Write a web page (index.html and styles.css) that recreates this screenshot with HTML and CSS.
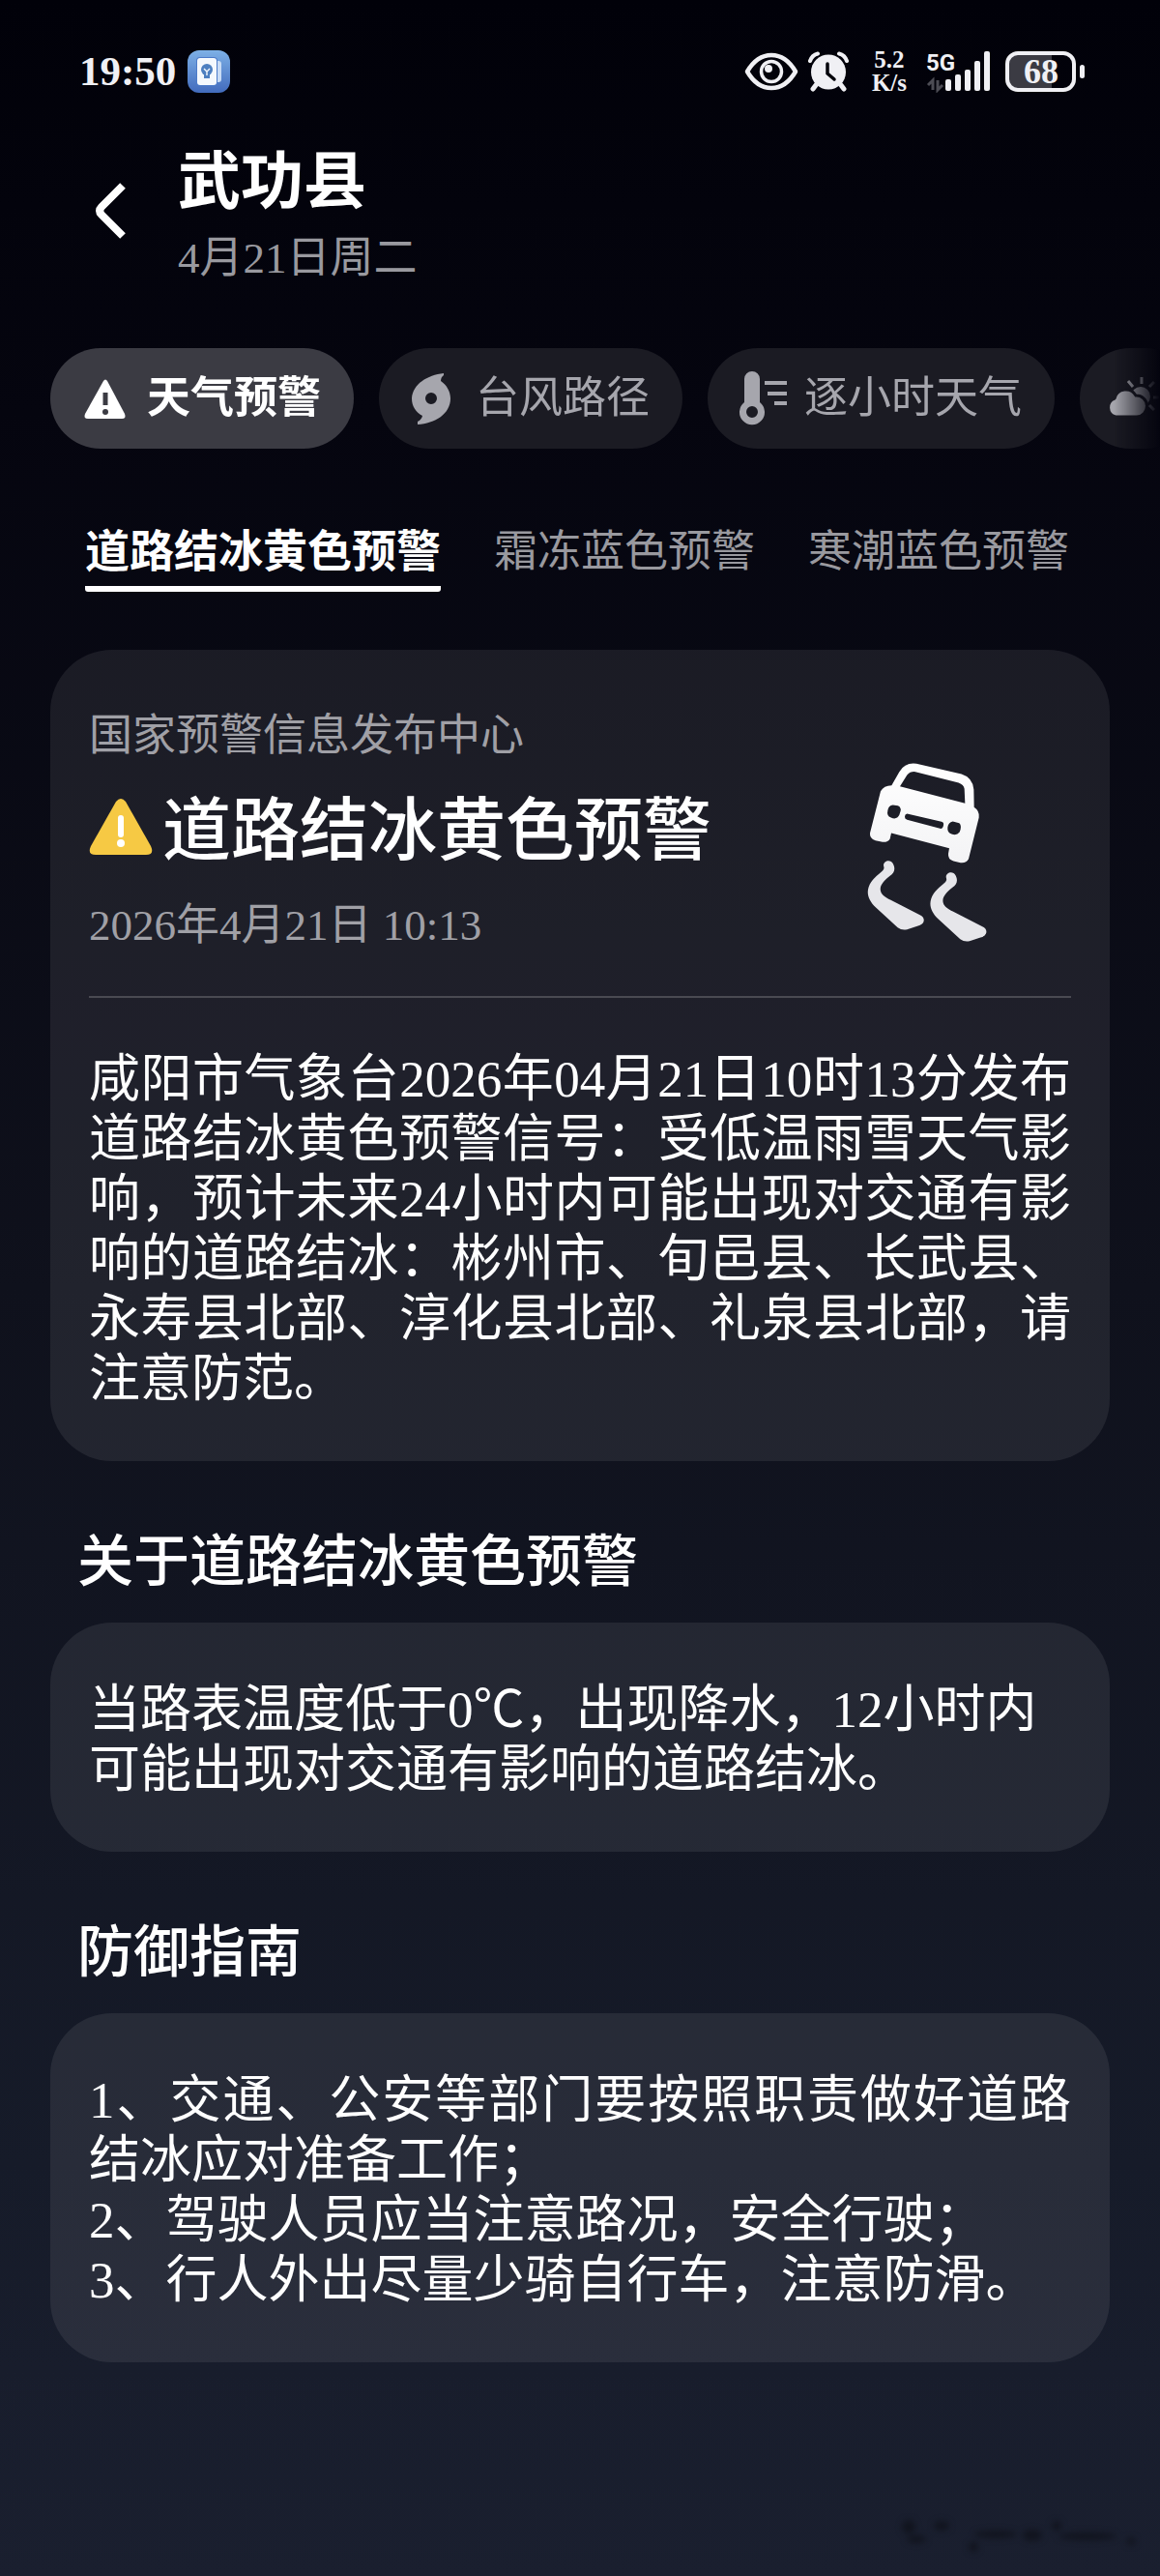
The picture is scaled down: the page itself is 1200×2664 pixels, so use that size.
FILE: index.html
```html
<!DOCTYPE html>
<html lang="zh-CN">
<head>
<meta charset="UTF-8">
<meta name="viewport" content="width=device-width, initial-scale=1.0">
<title>天气预警</title>
<link rel="stylesheet" href="styles.css">
</head>
<body>

<div class="status-bar">
    <span class="clock">19:50</span>
    <svg class="app-icon" viewBox="0 0 44 44" width="44" height="44">
        <defs>
            <linearGradient id="app-bg" x1="0" y1="0" x2="0" y2="1">
                <stop offset="0" stop-color="#7db0e6"/>
                <stop offset="1" stop-color="#426bbd"/>
            </linearGradient>
        </defs>
        <rect width="44" height="44" rx="12" fill="url(#app-bg)"/>
        <rect x="28" y="11" width="7" height="22" rx="3" fill="#c9dcf5"/>
        <rect x="9" y="7" width="22" height="30" rx="4" fill="#4c7bc9"/>
        <rect x="10" y="8" width="20" height="28" rx="3" fill="#f4f8fd"/>
        <circle cx="20" cy="20" r="6" fill="#4d7fc0"/>
        <path d="M17 24h6v5h-6z" fill="#4d7fc0"/>
        <path d="M17 19l3 3 3-3M20 22v4" fill="none" stroke="#f4f8fd" stroke-width="1.4"/>
    </svg>
    <div class="status-right">
        <svg class="eye" viewBox="0 0 56 40" width="56" height="40" fill="none" stroke="#f0f0f4">
            <path d="M3 20C10 8 18 3 28 3s18 5 25 17C46 32 38 37 28 37S10 32 3 20z" stroke-width="4.5" stroke-linejoin="round"/>
            <circle cx="28" cy="20" r="10.500" stroke-width="3.5"/>
            <circle cx="25" cy="17" r="4" fill="#f0f0f4" stroke="none"/>
        </svg>
        <svg class="alarm" viewBox="0 0 42 42" width="42" height="42" fill="none" stroke="#f0f0f4" stroke-linecap="round">
            <circle cx="21" cy="21.500" r="18" fill="#f0f0f4" stroke="none"/>
            <path d="M2 10Q4 4 10 2.500M40 10Q38 4 32 2.500" stroke-width="4"/>
            <path d="M8 35l-3 4M34 35l3 4" stroke-width="5"/>
            <path d="M20 13v10l7 6" stroke="#02020a" stroke-width="3.5"/>
        </svg>
        <span class="speed">5.2<br>K/s</span>
        <svg class="signal" viewBox="0 0 68 44" width="68" height="44" fill="#f0f0f4">
            <text class="network" x="0" y="21">5G</text>
            <rect x="20" y="30" width="6" height="12" rx="2"/>
            <rect x="30" y="25" width="6" height="17" rx="2"/>
            <rect x="40" y="20" width="6" height="22" rx="2"/>
            <rect x="50" y="11" width="6" height="31" rx="2"/>
            <rect x="60" y="1" width="6" height="41" rx="2"/>
            <path d="M7 41V31l-5 5M12 31v10l5-5" fill="none" stroke="#4c4c54" stroke-width="3"/>
        </svg>
        <svg class="battery" viewBox="0 0 82 42" width="82" height="42">
            <path d="M10 4h38v34H10a7 7 0 0 1-7-7V11a7 7 0 0 1 7-7z" fill="#3b3b43"/>
            <rect x="2" y="2" width="69" height="38" rx="11" fill="none" stroke="#f0f0f4" stroke-width="4"/>
            <rect x="77" y="14" width="5" height="14" rx="2.500" fill="#f0f0f4"/>
            <text class="level" x="37" y="33">68</text>
        </svg>
    </div>
</div>

<header class="header">
    <button class="back" type="button" aria-label="返回">
        <svg viewBox="0 0 40 64" width="40" height="64">
            <path d="M31 6L9 28q-4 4 0 8l22 22" fill="none" stroke="#fff" stroke-width="8"/>
        </svg>
    </button>
    <div>
        <h1>武功县</h1>
        <p class="today">4月21日周二</p>
    </div>
</header>

<nav class="chips">
    <button class="chip active" type="button">
        <svg viewBox="0 0 60 60" width="60" height="60">
            <path d="M29 12q2-3 4 0l18 34q2 5-3 5H13q-5 0-3-5z" fill="#fff"/>
            <path d="M31 24v13" stroke="#3b3b43" stroke-width="5"/>
            <circle cx="31" cy="44" r="3" fill="#3b3b43"/>
        </svg>
        天气预警
    </button>
    <button class="chip" type="button">
        <svg viewBox="0 0 60 60" width="60" height="60">
            <path fill-rule="evenodd" d="M41 4C24 6 9 15 8 30c0 8 4 14 11 18q-1 4-5 6v3C32 56 48 46 48 30c0-7-4-14-10-18q0-4 3-6zM28 24a6 6 0 1 1 0 12 6 6 0 0 1 0-12z" fill="#a6a6ad"/>
        </svg>
        台风路径
    </button>
    <button class="chip" type="button">
        <svg viewBox="0 0 60 60" width="60" height="60">
            <path fill-rule="evenodd" d="M12 10a8 8 0 0 1 16 0v24a13 13 0 1 1-16 0zM20 38a6 6 0 1 0 0 12 6 6 0 0 0 0-12z" fill="#a6a6ad"/>
            <path d="M33 14h23M36 25h20M43 35h13" stroke="#a6a6ad" stroke-width="4"/>
        </svg>
        逐小时天气
    </button>
    <button class="chip" type="button" aria-label="多日天气">
        <svg viewBox="0 0 60 60" width="60" height="60" fill="#a6a6ad">
            <circle cx="37" cy="28" r="10"/>
            <path d="M38 15V8M29 18l-5-6M46 18l5-5M50 29h6M46 37l5 5" stroke="#a6a6ad" stroke-width="3"/>
            <path d="M11 49a10 10 0 0 1-1-19 12 12 0 0 1 22-3 11 11 0 0 1 1 22z" stroke="#1b1b23" stroke-width="3"/>
        </svg>
    </button>
</nav>

<nav class="tabs">
    <a class="tab active" href="#">道路结冰黄色预警</a>
    <a class="tab" href="#">霜冻蓝色预警</a>
    <a class="tab" href="#">寒潮蓝色预警</a>
</nav>

<main>
    <article class="card">
        <div class="summary">
            <div>
                <p class="source">国家预警信息发布中心</p>
                <h2 class="alert-title">
                    <svg viewBox="0 0 66 60" width="66" height="60">
                        <path d="M28 4q5-6 10 0l26 46q4 9-5 9H7q-9 0-5-9z" fill="#f6c944"/>
                        <path d="M33 21v17" stroke="#fff" stroke-width="6" stroke-linecap="round"/>
                        <circle cx="33" cy="47" r="4" fill="#fff"/>
                    </svg>
                    道路结冰黄色预警
                </h2>
                <p class="time">2026年4月21日 10:13</p>
            </div>
            <svg class="car" viewBox="112 80 378 560" width="126" height="187">
                <defs>
                    <linearGradient id="car-fill" x1="0" y1="0" x2="0" y2="1">
                        <stop offset="0" stop-color="#ffffff"/>
                        <stop offset="1" stop-color="#f3f3f5"/>
                    </linearGradient>
                </defs>
                <path fill="url(#car-fill)" fill-rule="evenodd" d="M188 152L212 110Q230 80 265 85L405 117Q440 128 443 165L444 220Q462 232 459 252L427 380Q420 394 402 392L380 387Q362 382 364 364L367 347L187 300L183 318Q177 329 160 328L138 323Q119 317 121 300L154 170Q164 152 188 152ZM214 155L416 208L414 163Q412 150 396 144L262 110Q246 108 236 120ZM192 213Q178 215 176 230Q172 246 186 252Q204 260 212 244Q222 220 208 215ZM236 240Q229 241 229 249Q228 256 236 259L338 286Q347 288 349 276Q351 267 343 265ZM378 264Q364 267 362 282Q360 298 374 303Q390 309 399 297Q407 277 398 269Z"/>
                <g fill="#e6e6ea">
                    <path id="skid" d="M164 405C158 388 184 378 193 396C201 412 196 424 183 433C162 449 150 465 154 480C158 494 170 500 184 507L276 554Q292 562 287 576Q284 584 270 588L236 599Q220 603 207 593L140 532C116 510 110 488 117 467C125 445 145 430 160 417Q166 411 164 405Z"/>
                    <use href="#skid" x="194" y="36"/>
                </g>
            </svg>
        </div>
        <p class="text justified">咸阳市气象台2026年04月21日10时13分发布道路结冰黄色预警信号：受低温雨雪天气影响，预计未来24小时内可能出现对交通有影响的道路结冰：彬州市、旬邑县、长武县、永寿县北部、淳化县北部、礼泉县北部，请注意防范。</p>
    </article>

    <h2 class="section-title">关于道路结冰黄色预警</h2>
    <section class="card">
        <p class="text">当路表温度低于0℃，出现降水，12小时内可能出现对交通有影响的道路结冰。</p>
    </section>

    <h2 class="section-title">防御指南</h2>
    <section class="card">
        <p class="text justified">1、交通、公安等部门要按照职责做好道路结冰应对准备工作；<br>2、驾驶人员应当注意路况，安全行驶；<br>3、行人外出尽量少骑自行车，注意防滑。</p>
    </section>
</main>

<footer class="footer">
    <svg class="smudge" viewBox="0 0 256 40" width="256" height="40" fill="#11141e">
        <circle cx="20" cy="14" r="7"/>
        <ellipse cx="28" cy="27" rx="10" ry="4"/>
        <ellipse cx="54" cy="13" rx="8" ry="5"/>
        <circle cx="87" cy="35" r="5"/>
        <ellipse cx="110" cy="22" rx="22" ry="4"/>
        <ellipse cx="148" cy="23" rx="10" ry="6"/>
        <circle cx="173" cy="13" r="5"/>
        <ellipse cx="205" cy="24" rx="30" ry="4"/>
        <circle cx="250" cy="29" r="4"/>
    </svg>
</footer>

</body>
</html>
```
FILE: styles.css
```css
/* Base */
* {
    box-sizing: border-box;
}
body {
    margin: 0;
    min-height: 100vh;
    overflow-x: hidden;
    background: linear-gradient(#010109 0%, #05050f 16%, #0f111c 50%, #161b29 84%, #1a1f2f 100%);
    color: #fff;
    font-family: "Liberation Serif", "Noto Sans CJK SC", serif;
}
h1, h2, p {
    margin: 0;
    font-weight: normal;
}
button {
    border: none;
    background: none;
    padding: 0;
    color: inherit;
    font-family: inherit;
    cursor: pointer;
}
svg {
    display: block;
    flex: none;
}

/* Status bar */
.status-bar {
    display: flex;
    align-items: center;
    height: 96px;
    padding: 52px 78px 0 82px;
    color: #f0f0f4;
}
.clock {
    font-size: 43px;
    font-weight: bold;
    line-height: 44px;
}
.app-icon {
    margin-left: 12px;
}
.status-right {
    display: flex;
    align-items: center;
    margin-left: auto;
}
.alarm {
    margin-left: 10px;
}
.speed {
    margin: 0 20px 0 24px;
    font-size: 25px;
    font-weight: bold;
    line-height: 24px;
    text-align: center;
}
.network {
    font: bold 24px Roboto, sans-serif;
}
.battery {
    margin-left: 14px;
}
.level {
    fill: #f0f0f4;
    font-size: 36px;
    font-weight: bold;
    text-anchor: middle;
}

/* Header */
.header {
    display: flex;
    align-items: center;
    gap: 48px;
    padding: 54px 52px 0 96px;
}
.back {
    padding-bottom: 12px;
}
h1 {
    font-size: 65px;
    font-weight: bold;
    line-height: 76px;
}
.today {
    margin-top: 11px;
    color: #99999f;
    font-size: 45px;
    line-height: 60px;
}

/* Chips */
.chips {
    display: flex;
    gap: 26px;
    margin-top: 63px;
    padding-left: 52px;
    overflow: hidden;
    -webkit-mask-image: linear-gradient(to left, transparent, #000 48px);
    mask-image: linear-gradient(to left, transparent, #000 48px);
}
.chip {
    display: flex;
    flex: none;
    align-items: center;
    gap: 14px;
    height: 104px;
    padding: 0 34px 0 26px;
    border-radius: 52px;
    background: #1b1b23;
    color: #a6a6ad;
    font-size: 45px;
    line-height: 60px;
}
.chip.active {
    background: #3b3b43;
    color: #fff;
    font-weight: bold;
}

/* Tabs */
.tabs {
    display: flex;
    gap: 55px;
    margin: 77px 52px 60px 88px;
}
.tab {
    padding-bottom: 5px;
    border-bottom: 6px solid transparent;
    border-radius: 3px;
    color: #99999f;
    font-size: 45px;
    line-height: 60px;
    text-decoration: none;
    white-space: nowrap;
}
.tab.active {
    border-bottom-color: #fff;
    color: #fff;
    font-size: 46px;
    font-weight: bold;
}

/* Cards */
main {
    padding: 0 52px;
}
.card {
    padding: 59px 40px 54px;
    border-radius: 64px;
    background: rgba(255, 255, 255, 0.08);
}
.summary {
    display: flex;
    justify-content: space-between;
    align-items: flex-end;
    margin-bottom: 53px;
    padding-bottom: 43px;
    border-bottom: 2px solid #4a4a52;
}
.source, .time {
    color: #a0a0a6;
    font-size: 45px;
    line-height: 60px;
}
.alert-title {
    display: flex;
    align-items: center;
    gap: 10px;
    margin: 26px 0;
    font-size: 71px;
    font-weight: 500;
    line-height: 84px;
}
.alert-title svg {
    margin-bottom: 8px;
}
.car {
    margin: 0 85px 12px 0;
}
.text {
    font-size: 53px;
    line-height: 62px;
}
.justified {
    text-align: justify;
}
.section-title {
    margin: 65px 28px 22px;
    font-size: 58px;
    font-weight: 500;
    line-height: 80px;
}

/* Footer */
.footer {
    display: flex;
    justify-content: flex-end;
    padding: 156px 24px 24px;
}
.smudge {
    filter: blur(3px);
}
```
